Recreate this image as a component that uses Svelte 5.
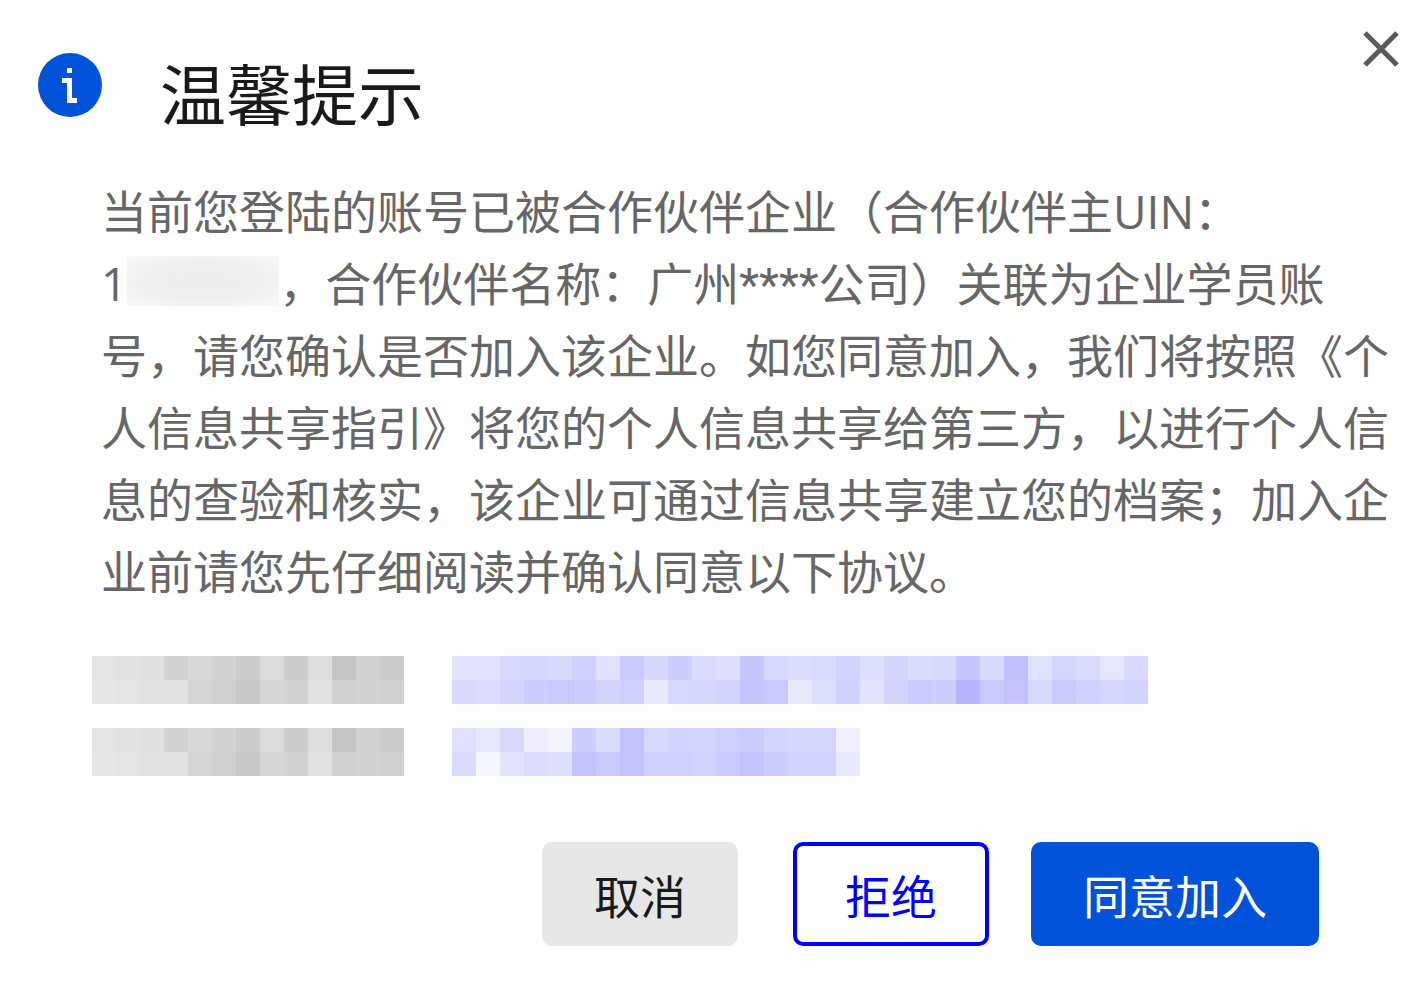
<script lang="ts">
  const CELL = 24;

  let open = true;

  // each string is one row of cells, one colour per cell
  const label = [
    'e4e4e4 e2e2e2 e0e0e0 d2d2d2 d8d8d8 d3d3d3 cdcdcd dcdcdc cdcdcd dedede c6c6c6 d0d0d0 cccccc',
    'e6e6e6 e3e3e3 e1e1e1 e1e1e1 d4d4d4 cfcfcf c8c8c8 d5d5d5 d2d2d2 e1e1e1 d1d1d1 d3d3d3 d1d1d1'
  ];

  const agreements = [
    {
      label,
      link: [
        'e0e0ff e1e1ff d8d8ff d6d6ff d9d9ff ceceff e1e0ff cacaff d6d6ff cdcdff dadaff e0ddff c7c6ff d8d8ff dcdcff dadaff d3d3ff dedeff d5d4ff dbdbff d9d9ff c7c6ff d9d9ff c0bfff e0e0ff d6d5ff dadaff e5e5ff d9d9ff',
        'd9d9ff dddcff d5d4ff ccccff c8c8ff cbcbff d4d3ff cfcfff e8e8fe d7d7ff d6d6ff d4d3ff c5c4ff c8c7ff e8e8fe ddddff d0d1ff e4e3ff d4d3ff c8c7ff cdcdff b6b6ff c9c8ff c3c2ff d8d8ff c9c8ff d1d1ff d6d5ff d3d3ff'
      ]
    },
    {
      label,
      link: [
        'e0dfff e6e6ff d8d8ff efedff f4f4ff cdcdff dadaff c3c2ff d9d9ff d4d3ff d5d4ff cfcfff cbcbff d5d4ff d6d6ff d6d5ff f0eeff',
        'dadaff f5f6ff e3e3ff dddcff dedfff c2c2ff c9c8ff c3c2ff ceceff d0d0ff d3d2ff cacaff c2c2ff cdcdff d4d3ff d1d2ff e8e8fe'
      ]
    }
  ];

  const toCells = (rows: string[]) => rows.map(row => row.split(' '));

  const close = () => {
    open = false;
  };
</script>

{#snippet mosaic(rows)}
  {@const cells = toCells(rows)}
  <svg
    class="mosaic"
    width={cells[0].length * CELL}
    height={cells.length * CELL}
    shape-rendering="crispEdges"
    aria-hidden="true"
  >
    {#each cells as row, y}
      {#each row as color, x}
        <rect x={x * CELL} y={y * CELL} width={CELL} height={CELL} fill="#{color}" />
      {/each}
    {/each}
  </svg>
{/snippet}

{#if open}
  <div class="dialog" role="dialog" aria-labelledby="dialog-title" lang="zh-CN">
    <header>
      <svg class="info" viewBox="0 0 64 64" aria-hidden="true">
        <circle cx="32" cy="32" r="32" fill="#0052d9" />
        <path d="M29 15h5v5h-5zM24 25h10v20h5v5H29V30h-5z" fill="#fff" />
      </svg>
      <h1 id="dialog-title">温馨提示</h1>
      <button class="close" aria-label="关闭" on:click={close}>
        <svg viewBox="0 0 36 36" aria-hidden="true">
          <path d="M2 2l32 32M34 2L2 34" stroke="#5a5a5a" stroke-width="5" fill="none" />
        </svg>
      </button>
    </header>

    <p>
      当前您登陆的账号已被合作伙伴企业（合作伙伴主UIN：<span class="uin">1<span class="hidden"></span>，</span>合作伙伴名称：广州<span class="stars">****</span>公司）关联为企业学员账号，请您确认是否加入该企业。如您同意加入，我们将按照《个人信息共享指引》将您的个人信息共享给第三方，以进行个人信息的查验和核实，该企业可通过信息共享建立您的档案；加入企业前请您先仔细阅读并确认同意以下协议。
    </p>

    <div class="agreements">
      {#each agreements as item}
        <div class="agreement">
          {@render mosaic(item.label)}
          {@render mosaic(item.link)}
        </div>
      {/each}
    </div>

    <footer>
      <button class="btn cancel" on:click={close}>取消</button>
      <button class="btn reject" on:click={close}>拒绝</button>
      <button class="btn agree" on:click={close}>同意加入</button>
    </footer>
  </div>
{/if}

<style>
  :global(body) {
    margin: 0;
    background: #fefefe;
  }

  .dialog {
    box-sizing: border-box;
    padding: 31px 16px 60px 38px;
    color: #666;
    font-family: 'Open Sans', 'Noto Sans CJK SC', sans-serif;
    font-size: 46px;
    line-height: 72px;
  }

  header {
    display: flex;
    align-items: flex-start;
  }

  .info {
    flex: none;
    width: 64px;
    height: 64px;
    margin-top: 22px;
  }

  h1 {
    margin: 15px 0 0 58px;
    color: #1a1a1a;
    font-size: 66px;
    font-weight: 400;
    line-height: 96px;
  }

  .close {
    margin-left: auto;
    padding: 0;
    border: none;
    background: none;
    cursor: pointer;
  }

  .close svg {
    display: block;
    width: 36px;
    height: 36px;
  }

  p {
    margin: 33px 0 0 63px;
  }

  .uin {
    white-space: nowrap;
  }

  .hidden {
    display: inline-block;
    width: 152px;
    height: 50px;
    vertical-align: -5px;
    background: radial-gradient(ellipse at center, #ebebeb 0%, #efefef 50%, #f8f8f8 100%);
  }

  .stars {
    font-family: Roboto, sans-serif;
    line-height: 1;
  }

  .agreements {
    display: flex;
    flex-direction: column;
    gap: 24px;
    margin: 49px 0 0 54px;
  }

  .agreement {
    display: flex;
    gap: 48px;
  }

  .mosaic {
    display: block;
    flex: none;
  }

  footer {
    display: flex;
    justify-content: flex-end;
    margin: 66px 80px 0 0;
  }

  .btn {
    box-sizing: border-box;
    height: 104px;
    padding: 4px 48px 0;
    border: 4px solid transparent;
    border-radius: 10px;
    font: inherit;
    cursor: pointer;
  }

  .cancel {
    background: #e6e6e6;
    border-color: #e6e6e6;
    color: #1a1a1a;
  }

  .reject {
    margin-left: 55px;
    background: #fff;
    border-color: #0000ff;
    color: #0000ff;
  }

  .agree {
    margin-left: 42px;
    background: #0052d9;
    border-color: #0052d9;
    color: #fff;
  }
</style>
